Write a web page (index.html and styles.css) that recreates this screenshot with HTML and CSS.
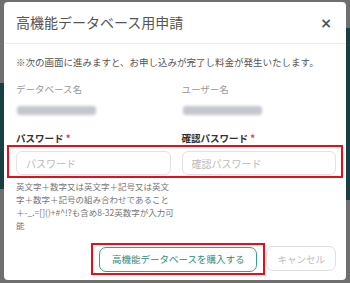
FILE: index.html
```html
<!DOCTYPE html>
<html lang="ja">
<head>
  <meta charset="UTF-8" />
  <meta name="viewport" content="width=device-width, initial-scale=1.0"/>
  <title>高機能データベース用申請</title>
  <link rel="stylesheet" href="styles.css">
</head>
<body>

  <div class="page">
    <div class="side side-left"></div>
    <div class="side side-right"></div>
  </div>

  <div class="overlay">
    <div class="modal">
      <div class="modal-header">
        <h3 class="modal-title">高機能データベース用申請</h3>
        <span class="close">&times;</span>
      </div>

      <div class="modal-body">
        <p class="notice">※次の画面に進みますと、お申し込みが完了し料金が発生いたします。</p>

        <div class="grid">
          <div>
            <div class="info-label">データベース名</div>
            <div class="info-value"></div>
          </div>
          <div>
            <div class="info-label">ユーザー名</div>
            <div class="info-value"></div>
          </div>
        </div>

        <div class="grid field-labels">
          <label for="pw">パスワード <span class="req">*</span></label>
          <label for="pw2">確認パスワード <span class="req">*</span></label>
        </div>

        <div class="highlight field-row">
          <div class="grid">
            <input type="password" id="pw" placeholder="パスワード">
            <input type="password" id="pw2" placeholder="確認パスワード">
          </div>
        </div>

        <div class="grid">
          <p class="help">英文字＋数字又は英文字＋記号又は英文字＋数字＋記号の組み合わせであること＋-_.=[]()+#^!?も含め8-32英数字が入力可能</p>
        </div>
      </div>

      <div class="modal-footer">
        <div class="highlight btn-wrap">
          <button class="btn btn-buy">高機能データベースを購入する</button>
        </div>
        <button class="btn btn-cancel">キャンセル</button>
      </div>
    </div>
  </div>

</body>
</html>
```

FILE: styles.css
```css
:root {
  --teal: #3a9d8f;
  --red: #e3101b;
  --text: #555;
  --muted: #999;
  --border: #e2e2e2;
}
body {
  margin: 0;
  height: 283px;
  overflow: hidden;
  background: #6f6f6f;
  font-family: "Noto Sans CJK JP", "Noto Sans", sans-serif;
  color: var(--text);
}
.page {
  display: flex;
  justify-content: space-between;
  height: 283px;
}
.side {
  width: 4px;
  background: #173f44;
}
.side-left {
  margin-top: 83px;
  height: 106px;
}
.side-right {
  margin-top: 28px;
  height: 172px;
}
.overlay {
  position: fixed;
  inset: 0;
  padding: 2px 4px 0;
}
.modal {
  width: 342px;
  height: 278px;
  background: #fff;
  border-radius: 4px;
  box-sizing: border-box;
}
.modal-header {
  display: flex;
  align-items: center;
  justify-content: space-between;
  height: 41px;
  padding: 0 14px 0 12px;
  border-bottom: 1px solid #ececec;
}
.modal-title {
  margin: 0;
  font-size: 14px;
  font-weight: 400;
  line-height: 41px;
  color: #555;
}
.close {
  font-family: "DejaVu Sans", sans-serif;
  font-size: 14px;
  font-weight: bold;
  color: #555;
  line-height: 1;
}
.modal-body {
  padding: 11px 10px 0 12px;
}
.notice {
  margin: 0 0 13px;
  font-size: 9.5px;
  line-height: 14px;
  white-space: nowrap;
}
.grid {
  display: grid;
  grid-template-columns: 1fr 1fr;
  column-gap: 11px;
}
.info-label {
  font-size: 9.5px;
  line-height: 14px;
  color: var(--muted);
}
.info-value {
  width: 79px;
  height: 9px;
  margin-top: 10px;
  margin-left: 1px;
  background: #c3c6cc;
  border-radius: 3px;
  filter: blur(1.5px);
}
.field-labels {
  margin-top: 17px;
}
.field-labels label {
  font-size: 9.5px;
  font-weight: bold;
  line-height: 12px;
  color: #333;
}
.req {
  color: #e53935;
}
.highlight {
  border: 2px solid var(--red);
}
.field-row {
  margin: 1px -7px 0 -9px;
  padding: 4px 5px 1px 7px;
}
input {
  height: 24px;
  box-sizing: border-box;
  padding: 0 9px;
  border: 1px solid var(--border);
  border-radius: 6px;
  font-family: inherit;
  font-size: 10px;
  color: var(--text);
  outline: none;
}
input::placeholder {
  color: #bbb;
}
.help {
  width: 161px;
  margin: 1.5px 0 0;
  font-size: 8.5px;
  line-height: 13px;
  color: #777;
  word-break: break-all;
}
.modal-footer {
  display: flex;
  justify-content: flex-end;
  align-items: center;
  gap: 1px;
  padding: 11px 10px 0;
}
.btn-wrap {
  padding: 2px 6px 1px;
}
.btn {
  height: 25px;
  padding: 0 11px;
  font-family: inherit;
  font-size: 9.5px;
  background: #fff;
  border-radius: 7px;
  cursor: pointer;
}
.btn-buy {
  display: block;
  padding: 0 12px;
  border: 1px solid var(--teal);
  color: #2f8a7d;
}
.btn-cancel {
  padding: 0 10px;
  border: 1px solid #e0e0e0;
  color: #bdbdbd;
}
```
